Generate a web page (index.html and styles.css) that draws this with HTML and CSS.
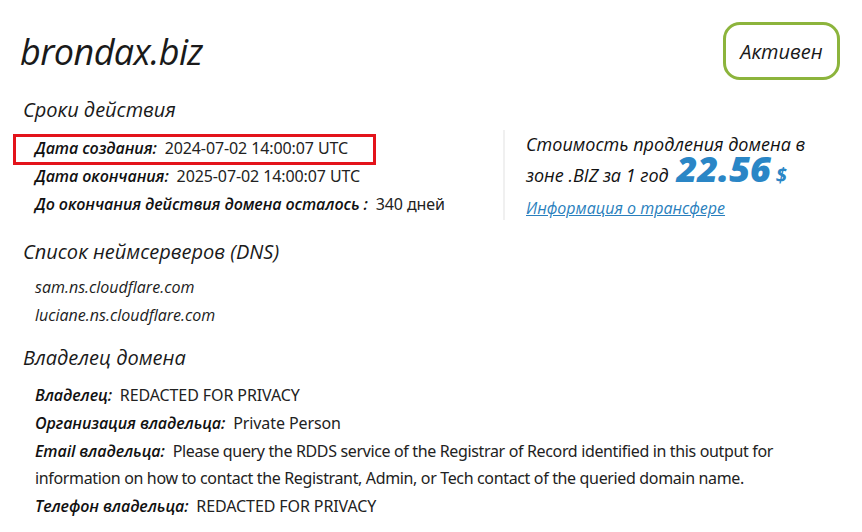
FILE: index.html
```html
<!DOCTYPE html>
<html lang="ru">
<head>
<meta charset="utf-8">
<title>brondax.biz</title>
<link rel="stylesheet" href="styles.css">
</head>
<body>
<div class="page">
  <header class="head">
    <h1 class="domain">brondax.biz</h1>
    <div class="badge">Активен</div>
  </header>

  <div class="top">
    <section class="terms">
      <h2 class="sec-title">Сроки действия</h2>
      <div class="rows">
        <div class="row hl"><span class="lbl">Дата создания:</span><span class="val">2024-07-02 14:00:07 UTC</span></div>
        <div class="row"><span class="lbl">Дата окончания:</span><span class="val">2025-07-02 14:00:07 UTC</span></div>
        <div class="row"><span class="lbl">До окончания действия домена осталось :</span><span class="val">340 дней</span></div>
      </div>
    </section>
    <aside class="price">
      <p class="price-text">Стоимость продления домена в зоне .BIZ за 1 год <span class="amount">22.56</span> <span class="cur">$</span></p>
      <a class="transfer" href="#">Информация о трансфере</a>
    </aside>
  </div>

  <section class="block dns">
    <h2 class="sec-title">Список неймсерверов (DNS)</h2>
    <ul class="ns">
      <li>sam.ns.cloudflare.com</li>
      <li>luciane.ns.cloudflare.com</li>
    </ul>
  </section>

  <section class="block ownerblock">
    <h2 class="sec-title">Владелец домена</h2>
    <div class="rows owner">
      <div class="row"><span class="lbl">Владелец:</span><span class="val">REDACTED FOR PRIVACY</span></div>
      <div class="row"><span class="lbl">Организация владельца:</span><span class="val">Private Person</span></div>
      <div class="row"><span class="lbl">Email владельца:</span><span class="val text">Please query the RDDS service of the Registrar of Record identified in this output for information on how to contact the Registrant, Admin, or Tech contact of the queried domain name.</span></div>
      <div class="row"><span class="lbl">Телефон владельца:</span><span class="val">REDACTED FOR PRIVACY</span></div>
    </div>
  </section>
</div>
</body>
</html>
```

FILE: styles.css
```css
* { box-sizing: border-box; }
html, body { margin: 0; padding: 0; background: #fff; }
body {
  font-family: "Noto Sans", "Open Sans", sans-serif;
  color: #1c1c1c;
}
.page {
  padding: 22px 22px 0 20px;
}
.head {
  display: flex;
  justify-content: space-between;
  align-items: center;
  height: 58px;
}
.domain {
  margin: 0;
  font-family: "Open Sans", sans-serif;
  font-style: italic;
  font-weight: 500;
  font-size: 36px;
  letter-spacing: -0.6px;
  color: #1a1a1a;
}
.badge {
  width: 117px;
  height: 58px;
  border: 3px solid #8cb43c;
  border-radius: 17px;
  display: flex;
  align-items: center;
  justify-content: center;
  font-family: "Open Sans", sans-serif;
  font-style: italic;
  font-weight: 500;
  font-size: 20px;
  color: #1a1a1a;
}
.sec-title {
  margin: 0;
  font-family: "Open Sans", sans-serif;
  font-style: italic;
  font-weight: 400;
  font-size: 20px;
  line-height: 28px;
  color: #1a1a1a;
  padding-left: 3px;
}
.top {
  display: flex;
  margin-top: 16px;
}
.terms {
  width: 483px;
}
.rows {
  margin-top: 10px;
}
.row {
  font-size: 16px;
  line-height: 28px;
  padding-left: 15px;
}
.row.hl {
  border: 3px solid #e3131b;
  margin-left: -7px;
  width: 363px;
  line-height: 23px;
  padding: 0 0 2px 19px;
  margin-bottom: -3px;
}
.lbl {
  font-family: "Open Sans", sans-serif;
  font-style: italic;
  font-weight: 600;
  margin-right: 8px;
  color: #111;
  letter-spacing: -0.1px;
}
.val {
  color: #222;
  letter-spacing: -0.1px;
}
.val.text {
  letter-spacing: -0.35px;
}
.price {
  border-left: 2px solid #f0f0f0;
  margin-top: 34px;
  padding-left: 21px;
  height: 90px;
}
.price-text {
  margin: 0;
  font-family: "Open Sans", sans-serif;
  font-style: italic;
  font-weight: 500;
  font-size: 18px;
  line-height: 29px;
  color: #111;
  width: 300px;
}
.amount {
  font-weight: 800;
  font-size: 36px;
  color: #2a86c6;
  line-height: 20px;
  margin-left: 3px;
}
.cur {
  font-weight: 700;
  font-size: 20px;
  color: #2a86c6;
  line-height: 20px;
}
.transfer {
  display: block;
  margin-top: 7px;
  font-family: "Open Sans", sans-serif;
  font-style: italic;
  font-weight: 500;
  font-size: 16px;
  color: #2a7fbd;
  text-decoration: underline;
  line-height: 22px;
}
.dns {
  margin-top: 18px;
}
.ns {
  list-style: none;
  margin: 7px 0 0;
  padding: 0 0 0 15px;
}
.ns li {
  font-family: "Open Sans", sans-serif;
  font-style: italic;
  font-weight: 500;
  font-size: 16px;
  line-height: 28px;
}
.ownerblock {
  margin-top: 15px;
}
.owner {
  margin-top: 10px;
}
.owner .row {
  line-height: 27.75px;
}
```
